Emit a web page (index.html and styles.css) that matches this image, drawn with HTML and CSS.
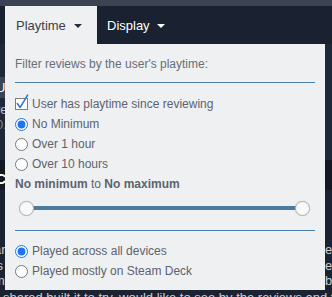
FILE: index.html
```html
<!DOCTYPE html>
<html>
<head>
<meta charset="utf-8">
<link rel="stylesheet" href="styles.css">
</head>
<body>
<div class="topbar"></div>
<nav class="tabs">
  <div class="tab active">Playtime <span class="caret"></span></div>
  <div class="tab">Display <span class="caret light"></span></div>
</nav>
<main class="bg">
  <div class="band blue">
    <div class="chip"><span class="frag-l white">U</span></div>
    <div class="line"><span class="frag-l">re</span></div>
    <div class="line dim"><span class="frag-l">0.</span></div>
  </div>
  <div class="band dark">
    <div class="line strong"><span class="frag-l">C</span></div>
    <div class="line dim small"><span class="frag-l">1.</span></div>
  </div>
  <div class="band para">
    <div class="pline"><span class="frag-l">ar</span><span class="frag-r">e a</span></div>
    <div class="pline"><span class="frag-l">'s</span><span class="frag-r">e</span></div>
    <div class="pline"><span class="frag-l">m</span><span class="frag-r">b</span></div>
    <div class="pline last">shared built it to try, would like to see by the reviews and to stay to be</div>
  </div>
</main>

<div class="menu">
  <p class="intro">Filter reviews by the user's playtime:</p>
  <hr class="rule">
  <label class="opt first">
    <svg class="check" width="15" height="16" viewBox="0 0 15 16"><rect x="0.5" y="4.5" width="12" height="11" fill="#fff" stroke="#7d7d7d"/><path d="M2.3 9.6 L5.2 13.4 L12.6 1.2" fill="none" stroke="#2a78e0" stroke-width="1.6" stroke-linecap="round" stroke-linejoin="round"/></svg>
    <span>User has playtime since reviewing</span>
  </label>
  <label class="opt"><input type="radio" name="pt" checked><span>No Minimum</span></label>
  <label class="opt"><input type="radio" name="pt"><span>Over 1 hour</span></label>
  <label class="opt"><input type="radio" name="pt"><span>Over 10 hours</span></label>
  <div class="range"><b>No minimum</b> to <b>No maximum</b></div>
  <div class="slider">
    <div class="track"></div>
    <span class="thumb left"></span>
    <span class="thumb right"></span>
  </div>
  <hr class="rule second">
  <label class="opt first2"><input type="radio" name="dev" checked><span>Played across all devices</span></label>
  <label class="opt"><input type="radio" name="dev"><span>Played mostly on Steam Deck</span></label>
</div>
</body>
</html>
```

FILE: styles.css
```css
html, body {
  margin: 0;
  padding: 0;
}
body {
  width: 332px;
  height: 297px;
  overflow: hidden;
  background: #1b2230;
  font-family: "Liberation Sans", Arial, sans-serif;
  position: relative;
}
.topbar {
  height: 6px;
  background: #3c4453;
}
.tabs {
  display: flex;
  height: 38px;
  padding-left: 5px;
  background: #1a2130;
}
.tab {
  display: flex;
  align-items: center;
  color: #ffffff;
  font-size: 13px;
  padding: 0 0 0 10px;
  width: 92px;
  box-sizing: border-box;
}
.tab.active {
  background: #eff0f2;
  color: #3a3f47;
  padding-left: 11px;
}
.caret {
  display: inline-block;
  width: 0;
  height: 0;
  margin-left: 8px;
  margin-top: 1px;
  border-left: 4px solid transparent;
  border-right: 4px solid transparent;
  border-top: 4px solid #2a2f36;
}
.caret.light {
  border-top-color: #ffffff;
  margin-left: 7px;
}

.bg {
  display: flex;
  flex-direction: column;
}
.band.blue {
  background: #1d2839;
  padding-top: 33px;
  height: 116px;
  box-sizing: border-box;
}
.chip {
  height: 21px;
  width: 60px;
  background: #3a4452;
  display: flex;
  align-items: center;
}
.frag-l {
  margin-left: -4px;
  font-size: 13px;
  color: #b7c0c8;
}
.white { color: #ffffff; }
.line {
  height: 15px;
  line-height: 15px;
  display: flex;
}
.band.blue .chip + .line { margin-top: 4px; }
.dim .frag-l { color: #7c8792; }
.band.dark {
  background: #121923;
  height: 30px;
  padding-top: 12px;
  box-sizing: border-box;
  overflow: hidden;
}
.strong .frag-l {
  color: #ffffff;
  font-weight: bold;
  font-size: 14px;
}
.small .frag-l { font-size: 11px; }
.band.para {
  background: #1b2231;
  padding-top: 52px;
  height: 120px;
  box-sizing: border-box;
}
.pline {
  display: flex;
  justify-content: space-between;
  height: 15.5px;
  line-height: 15.5px;
  font-size: 13px;
  color: #c6d0d9;
}
.frag-r {
  margin-right: -14px;
  width: 21px;
  color: #c6d0d9;
}
.pline .frag-l { color: #c6d0d9; margin-left: -6px; }
.pline.last {
  margin-top: 1px;
  white-space: nowrap;
  padding-left: 3px;
}

.menu {
  position: absolute;
  top: 44px;
  left: 5px;
  width: 320px;
  height: 246px;
  box-sizing: border-box;
  background: #eff0f2;
  padding: 12px 10px 0 10px;
  display: flex;
  flex-direction: column;
}
.intro {
  margin: 0;
  font-size: 12px;
  line-height: 16px;
  color: #676e78;
}
.rule {
  margin: 10px 0 0 0;
  border: 0;
  height: 1px;
  background: #4a80aa;
}
.rule.second {
  margin-top: 14px;
}
.opt {
  display: flex;
  align-items: center;
  height: 20px;
  font-size: 12px;
  color: #5c636e;
  gap: 4px;
}
.opt.first { margin-top: 11px; }
.opt.first2 { margin-top: 10px; }
.opt input {
  margin: 0;
  width: 13px;
  height: 13px;
  accent-color: #1f75ef;
}
.check {
  margin-top: -4px;
  margin-right: -2px;
  flex: none;
}
.range {
  height: 20px;
  line-height: 20px;
  font-size: 12px;
  color: #5c636e;
}
.range b { font-weight: bold; }
.slider {
  position: relative;
  margin: 6px 13px 0 11px;
  height: 16px;
  display: flex;
  align-items: center;
}
.track {
  flex: 1;
  height: 4px;
  background: #4b7ba1;
}
.thumb {
  position: absolute;
  top: 0.5px;
  width: 15px;
  height: 15px;
  box-sizing: border-box;
  border-radius: 50%;
  background: #f9f9f9;
  border: 1px solid #b3b3b3;
  box-shadow: 0 0 1px rgba(0,0,0,0.2);
}
.thumb.left { left: -7.5px; }
.thumb.right { right: -7.5px; }
```
